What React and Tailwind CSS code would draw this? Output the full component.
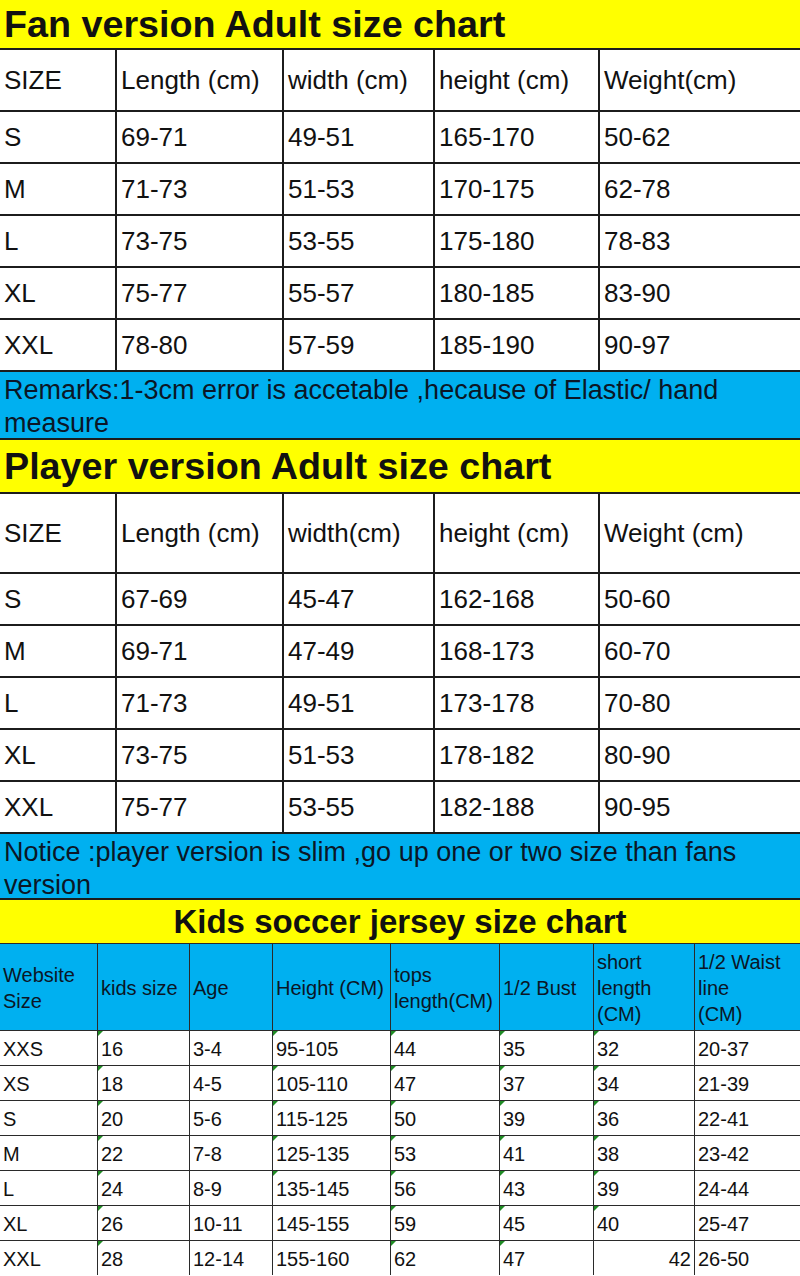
import React from 'react'

const fanRows = [
  ['S', '69-71', '49-51', '165-170', '50-62'],
  ['M', '71-73', '51-53', '170-175', '62-78'],
  ['L', '73-75', '53-55', '175-180', '78-83'],
  ['XL', '75-77', '55-57', '180-185', '83-90'],
  ['XXL', '78-80', '57-59', '185-190', '90-97'],
]

const playerRows = [
  ['S', '67-69', '45-47', '162-168', '50-60'],
  ['M', '69-71', '47-49', '168-173', '60-70'],
  ['L', '71-73', '49-51', '173-178', '70-80'],
  ['XL', '73-75', '51-53', '178-182', '80-90'],
  ['XXL', '75-77', '53-55', '182-188', '90-95'],
]

const kidsRows = [
  ['XXS', '16', '3-4', '95-105', '44', '35', '32', '20-37'],
  ['XS', '18', '4-5', '105-110', '47', '37', '34', '21-39'],
  ['S', '20', '5-6', '115-125', '50', '39', '36', '22-41'],
  ['M', '22', '7-8', '125-135', '53', '41', '38', '23-42'],
  ['L', '24', '8-9', '135-145', '56', '43', '39', '24-44'],
  ['XL', '26', '10-11', '145-155', '59', '45', '40', '25-47'],
  ['XXL', '28', '12-14', '155-160', '62', '47', '42', '26-50'],
]

// which kid cells get the little green "number stored as text" corner
function hasFlag(row, col) {
  if (col === 1 || col === 4 || col === 5) return true
  if (col === 3) return row <= 4
  if (col === 6) return row <= 5
  return false
}

const adultCols = 'grid grid-cols-[115px_167px_151px_165px_1fr]'
const kidsCols = 'grid grid-cols-[97px_92px_83px_118px_109px_94px_101px_1fr]'

function AdultCells({ cells }) {
  return cells.map((c, i) => (
    <div
      key={i}
      className={`flex items-center pl-1 text-[26px] ${
        i > 0 ? 'border-l-2 border-[#1c1c1c] pl-[4px]' : ''
      }`}
    >
      {c}
    </div>
  ))
}

function AdultTable({ header, rows, headHeight }) {
  return (
    <div>
      <div
        className={`${adultCols} border-t-2 border-[#1c1c1c] ${headHeight}`}
      >
        <AdultCells cells={header} />
      </div>
      {rows.map((r, i) => (
        <div key={i} className={`${adultCols} border-t-2 border-[#1c1c1c] h-[52px]`}>
          <AdultCells cells={r} />
        </div>
      ))}
    </div>
  )
}

function Band({ children, height }) {
  return (
    <div
      className={`bg-[#00b0f0] border-y-2 border-[#1c1c1c] px-1 pt-[2px] text-[27px] leading-[33px] text-[#0b1626] ${height}`}
    >
      {children}
    </div>
  )
}

export default function App() {
  return (
    <div className="w-[800px] h-[1276px] overflow-hidden bg-white text-[#111] font-['Liberation_Sans',Arial,sans-serif]">
      <div className="h-[48px] bg-[#ffff00] flex items-center px-1 font-bold text-[37.7px]">
        Fan version Adult size chart
      </div>
      <AdultTable
        header={['SIZE', 'Length (cm)', 'width (cm)', 'height (cm)', 'Weight(cm)']}
        rows={fanRows}
        headHeight="h-[62px]"
      />
      <Band height="h-[70px]">
        Remarks:1-3cm error is accetable ,hecause of Elastic/ hand
        <br />
        measure
      </Band>
      <div className="h-[52px] bg-[#ffff00] flex items-center px-1 font-bold text-[37.7px]">
        Player version Adult size chart
      </div>
      <AdultTable
        header={['SIZE', 'Length (cm)', 'width(cm)', 'height (cm)', 'Weight (cm)']}
        rows={playerRows}
        headHeight="h-[80px]"
      />
      <Band height="h-[68px]">
        Notice :player version is slim ,go up one or two size than fans
        <br />
        version
      </Band>
      <div className="h-[43px] bg-[#ffff00] flex items-center justify-center font-bold text-[33px]">
        Kids soccer jersey size chart
      </div>

      <div
        className={`${kidsCols} h-[87px] bg-[#00b0f0] border-t border-[#2a2a2a] text-[20px] leading-[26px] text-[#0b1626]`}
      >
        {[
          ['Website', 'Size'],
          ['kids size'],
          ['Age'],
          ['Height (CM)'],
          ['tops', 'length(CM)'],
          ['1/2 Bust'],
          ['short', 'length', '(CM)'],
          ['1/2 Waist', 'line', '(CM)'],
        ].map((lines, i) => (
          <div
            key={i}
            className={`flex flex-col justify-center px-[3px] pt-[2px] ${
              i > 0 ? 'border-l border-[#2a2a2a]' : ''
            }`}
          >
            {lines.map((l) => (
              <span key={l} className="whitespace-nowrap">
                {l}
              </span>
            ))}
          </div>
        ))}
      </div>
      {kidsRows.map((r, ri) => (
        <div
          key={ri}
          className={`${kidsCols} h-[35px] border-t border-[#2a2a2a] text-[20px]`}
        >
          {r.map((c, ci) => (
            <div
              key={ci}
              className={`relative flex items-center px-[3px] pt-[1px] ${
                ci > 0 ? 'border-l border-[#2a2a2a]' : ''
              } ${ri === 6 && ci === 6 ? 'justify-end' : ''}`}
            >
              {hasFlag(ri, ci) && (
                <span className="absolute left-0 top-0 w-0 h-0 border-t-[5px] border-r-[5px] border-t-[#1f8b24] border-r-transparent" />
              )}
              {c}
            </div>
          ))}
        </div>
      ))}
    </div>
  )
}
